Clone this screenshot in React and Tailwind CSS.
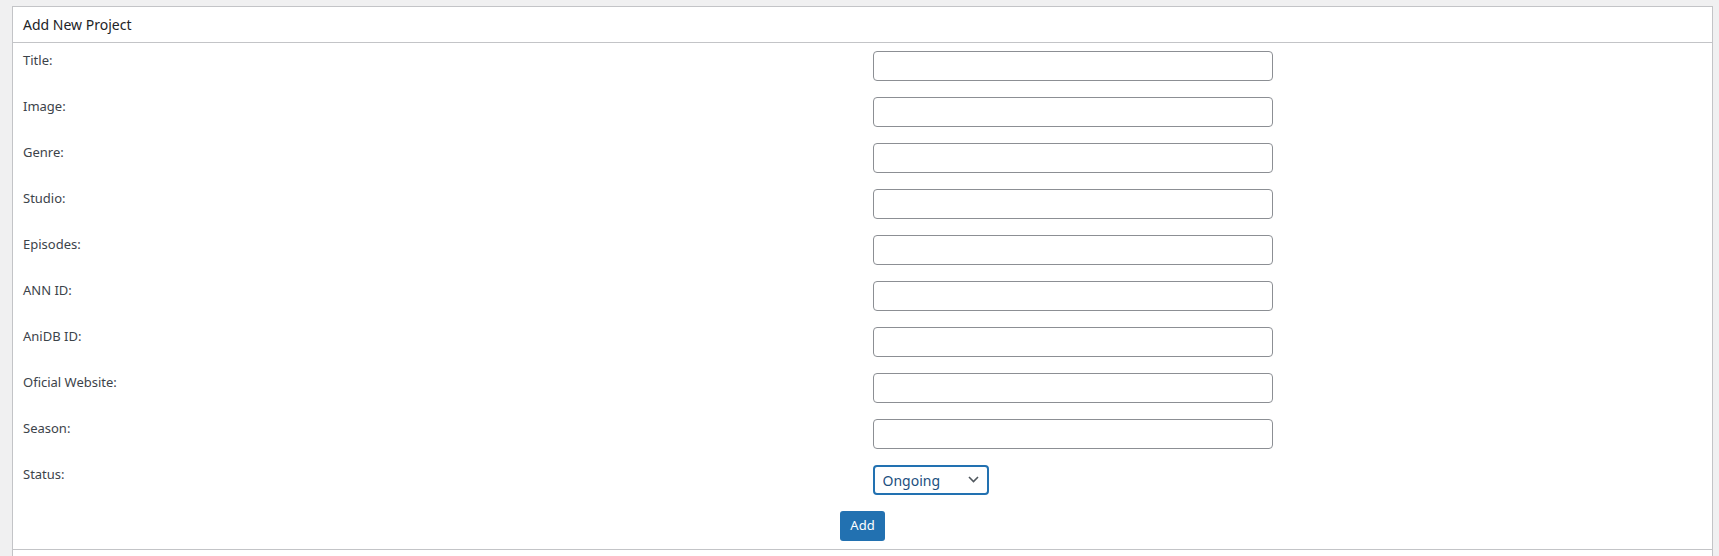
import React, { useState } from "react";

const fields = [
    "Title:",
    "Image:",
    "Genre:",
    "Studio:",
    "Episodes:",
    "ANN ID:",
    "AniDB ID:",
    "Oficial Website:",
    "Season:",
];

export default function App() {
    const [status, setStatus] = useState("Ongoing");

    return (
        <div className="min-h-screen bg-[#f0f0f1] pt-[6px] pl-[12px] pr-[6px] font-['Noto_Sans',sans-serif] text-[13px] text-[#3c434a]">
            <div className="border border-[#c3c4c7] bg-white">
                {/* header */}
                <div className="h-[36px] flex items-center px-[10px] border-b border-[#c3c4c7] text-[14px] text-[#1d2327]">
                    Add New Project
                </div>

                {/* rows */}
                {fields.map((label) => (
                    <div key={label} className="grid grid-cols-2">
                        <div className="px-[10px] py-2 leading-[19px]">{label}</div>
                        <div className="px-[10px] py-2">
                            <input
                                type="text"
                                className="block w-[400px] h-[30px] rounded-[4px] border border-[#8c8f94] bg-white px-2 outline-none"
                            />
                        </div>
                    </div>
                ))}

                <div className="grid grid-cols-2">
                    <div className="px-[10px] py-2 leading-[19px]">Status:</div>
                    <div className="px-[10px] py-2">
                        <div className="relative w-[116px]">
                            <select
                                value={status}
                                onChange={(e) => setStatus(e.target.value)}
                                className="block appearance-none w-[116px] h-[30px] rounded-[4px] border-2 border-[#2271b1] bg-white pl-[8px] pr-6 text-[14px] text-[#1c4f80] outline-none"
                            >
                                <option>Ongoing</option>
                                <option>Completed</option>
                                <option>Dropped</option>
                            </select>
                            <svg
                                className="absolute right-[10px] top-[11px] pointer-events-none"
                                width="11"
                                height="7"
                                viewBox="0 0 11 7"
                                fill="none"
                            >
                                <polyline points="1,1 5.5,5.5 10,1" stroke="#50575e" strokeWidth="1.6" />
                            </svg>
                        </div>
                    </div>
                </div>

                <div className="flex justify-center py-2">
                    <button className="h-[30px] px-[10px] rounded-[3px] bg-[#2271b1] text-white text-[13px]">
                        Add
                    </button>
                </div>

                {/* footer */}
                <div className="h-[36px] border-t border-[#c3c4c7]"></div>
            </div>
        </div>
    );
}
